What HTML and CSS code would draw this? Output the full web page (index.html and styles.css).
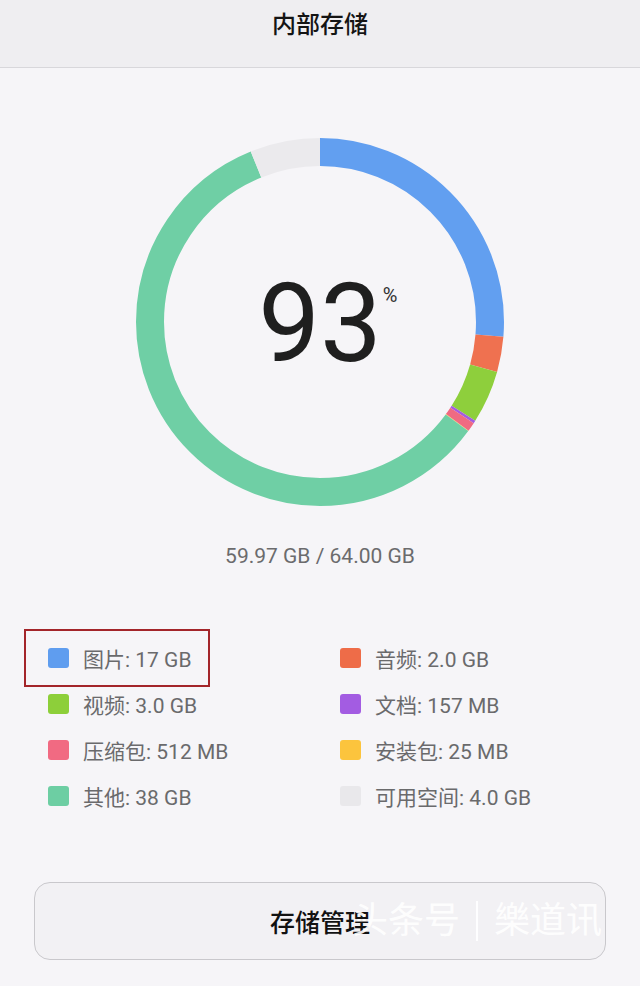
FILE: index.html
```html
<!DOCTYPE html>
<html lang="zh-CN">
<head>
    <meta charset="UTF-8">
    <meta name="viewport" content="width=device-width, initial-scale=1.0">
    <title>内部存储</title>
    <link rel="stylesheet" href="styles.css">
</head>
<body>
    <header class="topbar">
        <h1 class="title">内部存储</h1>
    </header>

    <main class="page">
        <!-- Usage ring -->
        <section class="usage">
            <div class="ring">
                <svg class="ring-chart" width="376" height="376" viewBox="0 0 376 376">
                    <g transform="rotate(-90 188 188)" fill="none" stroke-width="28">
                        <circle cx="188" cy="188" r="170" stroke="#629ff0" stroke-dasharray="280.68 1068.14" stroke-dashoffset="0"/>
                        <circle cx="188" cy="188" r="170" stroke="#ef7150" stroke-dasharray="33.02 1068.14" stroke-dashoffset="-280.68"/>
                        <circle cx="188" cy="188" r="170" stroke="#8ecf3c" stroke-dasharray="49.53 1068.14" stroke-dashoffset="-313.70"/>
                        <circle cx="188" cy="188" r="170" stroke="#a45de0" stroke-dasharray="2.59 1068.14" stroke-dashoffset="-363.23"/>
                        <circle cx="188" cy="188" r="170" stroke="#f06a82" stroke-dasharray="8.45 1068.14" stroke-dashoffset="-365.82"/>
                        <circle cx="188" cy="188" r="170" stroke="#fbc53d" stroke-dasharray="0.41 1068.14" stroke-dashoffset="-374.27"/>
                        <circle cx="188" cy="188" r="170" stroke="#6fcfa5" stroke-dasharray="627.41 1068.14" stroke-dashoffset="-374.68"/>
                        <circle cx="188" cy="188" r="170" stroke="#ebeaed" stroke-dasharray="66.04 1068.14" stroke-dashoffset="-1002.09"/>
                    </g>
                </svg>
                <div class="percent">
                    <span class="percent-value">93<span class="percent-sign">%</span></span>
                </div>
            </div>
            <p class="usage-total">59.97 GB / 64.00 GB</p>
        </section>

        <!-- Legend -->
        <ul class="legend">
            <li class="legend-item marked"><span class="swatch blue"></span>图片: 17 GB</li>
            <li class="legend-item"><span class="swatch orange"></span>音频: 2.0 GB</li>
            <li class="legend-item"><span class="swatch green"></span>视频: 3.0 GB</li>
            <li class="legend-item"><span class="swatch purple"></span>文档: 157 MB</li>
            <li class="legend-item"><span class="swatch pink"></span>压缩包: 512 MB</li>
            <li class="legend-item"><span class="swatch yellow"></span>安装包: 25 MB</li>
            <li class="legend-item"><span class="swatch teal"></span>其他: 38 GB</li>
            <li class="legend-item"><span class="swatch gray"></span>可用空间: 4.0 GB</li>
        </ul>

        <div class="actions">
            <button type="button" class="manage-btn">存储管理</button>
            <span class="watermark">头条号<span class="watermark-bar"></span>樂道讯</span>
        </div>
    </main>
</body>
</html>
```

FILE: styles.css
```css
body {
    margin: 0;
    padding: 0;
    background-color: #f6f5f8;
    font-family: Roboto, "Noto Sans CJK SC", sans-serif;
    color: #666;
}
.topbar {
    height: 67px;
    background-color: #efeef1;
    border-bottom: 1px solid #d8d7db;
    display: flex;
    justify-content: center;
}
.title {
    margin: 9px 0 0;
    font-size: 24px;
    line-height: 32px;
    font-weight: 500;
    color: #141414;
}
.page {
    padding-top: 66px;
}
/* Ring chart */
.usage {
    display: flex;
    flex-direction: column;
    align-items: center;
}
.ring {
    display: grid;
    width: 376px;
    height: 376px;
}
.ring-chart,
.percent {
    grid-area: 1 / 1;
}
.percent {
    display: flex;
    justify-content: center;
    align-items: center;
}
.percent-value {
    position: relative;
    font-size: 110px;
    line-height: 110px;
    color: #1f1f1f;
    margin-top: 4px;
}
.percent-sign {
    position: absolute;
    left: 100%;
    top: 16px;
    margin-left: 1px;
    font-size: 20px;
    line-height: 20px;
    color: #333;
}
.usage-total {
    margin: 34px 0 0;
    font-size: 21px;
    line-height: 24px;
    color: #6b6b6d;
}
/* Legend */
.legend {
    list-style: none;
    margin: 67px 0 0;
    padding: 0 0 0 48px;
    display: grid;
    grid-template-columns: 292px 1fr;
}
.legend-item {
    position: relative;
    display: flex;
    align-items: center;
    height: 46px;
    font-size: 21px;
    color: #6a6a6c;
}
.legend-item.marked::after {
    content: "";
    position: absolute;
    left: -24px;
    top: -6px;
    width: 182px;
    height: 54px;
    border: 2px solid #a3252a;
}
.swatch {
    width: 21px;
    height: 20px;
    border-radius: 3px;
    margin-right: 14px;
    flex-shrink: 0;
}
.swatch.blue { background-color: #5f9def; }
.swatch.orange { background-color: #ee6c48; }
.swatch.green { background-color: #8dcf3a; }
.swatch.purple { background-color: #a35ce2; }
.swatch.pink { background-color: #f16a82; }
.swatch.yellow { background-color: #fcc43d; }
.swatch.teal { background-color: #6dcea3; }
.swatch.gray { background-color: #e9e8eb; }
/* Bottom button */
.actions {
    position: relative;
    margin: 63px 34px 0;
}
.manage-btn {
    display: block;
    width: 100%;
    height: 78px;
    background-color: #f2f1f4;
    border: 1px solid #c9c8cc;
    border-radius: 16px;
    font-family: Roboto, "Noto Sans CJK SC", sans-serif;
    font-size: 25px;
    font-weight: 500;
    color: #121212;
    cursor: pointer;
}
.watermark {
    position: absolute;
    left: 318px;
    top: 17px;
    display: flex;
    align-items: center;
    font-size: 36px;
    line-height: 44px;
    color: rgba(255, 255, 255, 0.92);
    pointer-events: none;
}
.watermark-bar {
    width: 2px;
    height: 40px;
    margin: 0 16px;
    background-color: rgba(255, 255, 255, 0.92);
}
```
